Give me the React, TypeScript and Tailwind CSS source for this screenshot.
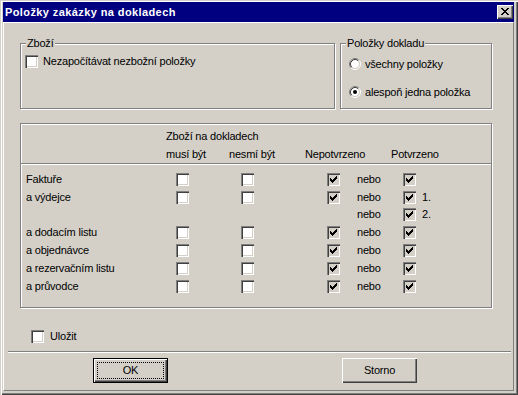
import React from 'react'

// classic Win 3D check box / radio pieces
const checkPixels: [number, number, number][] = [
	[6, 0, 1],
	[5, 1, 2],
	[0, 2, 1],
	[4, 2, 3],
	[0, 3, 2],
	[3, 3, 3],
	[0, 4, 5],
	[1, 5, 3],
	[2, 6, 1],
]

const closePixels: [number, number, number][] = [
	[0, 0, 2], [6, 0, 2],
	[1, 1, 2], [5, 1, 2],
	[2, 2, 4],
	[3, 3, 2],
	[2, 4, 4],
	[1, 5, 2], [5, 5, 2],
	[0, 6, 2], [6, 6, 2],
]

function Check({ checked = false }: { checked?: boolean }) {
	return (
		<div
			className={`relative w-[13px] h-[13px] shrink-0 shadow-[inset_1px_1px_0_#808080,inset_2px_2px_0_#404040,inset_-1px_-1px_0_#fff,inset_-2px_-2px_0_#d4d0c8] ${checked ? 'bg-[#d4d0c8]' : 'bg-white'}`}
		>
			{checked && (
				<svg width="7" height="7" viewBox="0 0 7 7" shapeRendering="crispEdges" className="absolute left-[3px] top-[3px]">
					{checkPixels.map(([x, y, w], i) => (
						<rect key={i} x={x} y={y} width={w} height={1} fill="#000" />
					))}
				</svg>
			)}
		</div>
	)
}

function Radio({ on = false }: { on?: boolean }) {
	return (
		<svg width="12" height="12" viewBox="0 0 12 12" className="shrink-0">
			<circle cx="6" cy="6" r="4" fill="#fff" />
			<path d="M2.11 9.89 A5.5 5.5 0 0 1 9.89 2.11" stroke="#808080" fill="none" />
			<path d="M9.89 2.11 A5.5 5.5 0 0 1 2.11 9.89" stroke="#fff" fill="none" />
			<path d="M2.82 9.18 A4.5 4.5 0 0 1 9.18 2.82" stroke="#404040" fill="none" />
			<path d="M9.18 2.82 A4.5 4.5 0 0 1 2.82 9.18" stroke="#d4d0c8" fill="none" />
			{on && <circle cx="6" cy="6" r="2" fill="#000" />}
		</svg>
	)
}

function Group({ label, className, children }: {
	label?: string
	className: string
	children: React.ReactNode
}) {
	return (
		<div className={`relative border border-[#808080] shadow-[inset_1px_1px_0_#fff,1px_1px_0_#fff] ${className}`}>
			{label && (
				<span className="absolute -top-[7px] left-[5px] px-px bg-[#d4d0c8] leading-[13px] whitespace-nowrap">
					{label}
				</span>
			)}
			{children}
		</div>
	)
}

const rows = [
	{ label: 'Faktuře', boxes: true, note: '', h: 'h-[18px]' },
	{ label: 'a výdejce', boxes: true, note: '1.', h: 'h-[18px]' },
	{ label: '', boxes: false, note: '2.', h: 'h-[17px]' },
	{ label: 'a dodacím listu', boxes: true, note: '', h: 'h-[18px]' },
	{ label: 'a objednávce', boxes: true, note: '', h: 'h-[18px]' },
	{ label: 'a rezervačním listu', boxes: true, note: '', h: 'h-[18px]' },
	{ label: 'a průvodce', boxes: true, note: '', h: 'h-[18px]' },
]

const cols = 'grid grid-cols-[145px_63px_76px_52px_34px_1fr] items-center'

export default function App() {
	return (
		<div className="w-[518px] h-[395px] bg-[#d4d0c8] pt-[2px] pl-[3px] pr-[4px] pb-[4px] flex flex-col text-[11px] tracking-[-0.2px] text-black font-['Liberation_Sans',Arial,sans-serif] shadow-[inset_1px_1px_0_#d4d0c8,inset_2px_2px_0_#fff,inset_-1px_-1px_0_#404040,inset_-2px_-2px_0_#808080] select-none">
			{/* title bar */}
			<div className="h-[20px] shrink-0 bg-[#000080] flex items-center justify-between pl-[2px] pr-[1px]">
				<span className="text-white font-bold tracking-[0.4px] leading-[13px]">Položky zakázky na dokladech</span>
				<div className="relative w-[16px] h-[14px] bg-[#d4d0c8] shadow-[inset_1px_1px_0_#fff,inset_-1px_-1px_0_#404040,inset_-2px_-2px_0_#808080]">
					<svg width="8" height="7" viewBox="0 0 8 7" shapeRendering="crispEdges" className="absolute left-[4px] top-[3px]">
						{closePixels.map(([x, y, w], i) => (
							<rect key={i} x={x} y={y} width={w} height={1} fill="#000" />
						))}
					</svg>
				</div>
			</div>

			{/* client */}
			<div className="flex-1 flex flex-col border border-white border-r-[#808080] border-b-[#808080]">
				<div className="flex mt-[20px] pl-[16px] gap-[5px]">
					<Group label="Zboží" className="w-[315px] h-[66px] pl-[4px] pt-[11px]">
						<div className="flex items-center gap-[5px]">
							<Check />
							<span className="leading-[13px]">Nezapočítávat nezbožní položky</span>
						</div>
					</Group>
					<Group label="Položky dokladu" className="w-[152px] h-[66px] pl-[8px] pt-[14px]">
						<div className="flex flex-col gap-[16px]">
							<div className="flex items-center gap-[4px] h-[12px]">
								<Radio />
								<span className="leading-[13px]">všechny položky</span>
							</div>
							<div className="flex items-center gap-[4px] h-[12px]">
								<Radio on />
								<span className="leading-[13px]">alespoň jedna položka</span>
							</div>
						</div>
					</Group>
				</div>

				<div className="pl-[16px] mt-[14px]">
					<Group className="w-[472px] h-[185px]">
						<div className="pt-[3px] border-b border-[#808080] shadow-[0_1px_0_#fff]">
							<div className={`${cols} h-[18px]`}>
								<span />
								<span className="col-span-5 whitespace-nowrap">Zboží na dokladech</span>
							</div>
							<div className={`${cols} h-[18px] whitespace-nowrap`}>
								<span />
								<span>musí být</span>
								<span>nesmí být</span>
								<span className="col-span-2">Nepotvrzeno</span>
								<span>Potvrzeno</span>
							</div>
						</div>
						<div className="pt-[6px]">
							{rows.map((r, i) => (
								<div key={i} className={`${cols} ${r.h} whitespace-nowrap`}>
									<span className="pl-[5px]">{r.label}</span>
									<div className="pl-[10px]">{r.boxes && <Check />}</div>
									<div className="pl-[12px]">{r.boxes && <Check />}</div>
									<div className="pl-[22px]">{r.boxes && <Check checked />}</div>
									<span>nebo</span>
									<div className="pl-[12px] flex items-center gap-[6px]">
										<Check checked />
										{r.note && <span>{r.note}</span>}
									</div>
								</div>
							))}
						</div>
					</Group>
				</div>

				<div className="flex items-center gap-[6px] pl-[27px] mt-[22px] h-[13px]">
					<Check />
					<span className="leading-[13px]">Uložit</span>
				</div>

				<div className="mt-[8px] ml-[4px] w-[503px] h-0 border-t border-[#808080] shadow-[0_1px_0_#fff]" />

				<div className="flex mt-[6px]">
					<button className="ml-[89px] w-[75px] h-[25px] border border-black bg-[#d4d0c8] p-0">
						<div className="h-full shadow-[inset_1px_1px_0_#fff,inset_-1px_-1px_0_#404040,inset_-2px_-2px_0_#808080] p-[3px]">
							<div className="h-full border border-dotted border-black flex items-center justify-center">OK</div>
						</div>
					</button>
					<button className="ml-[174px] w-[75px] h-[25px] bg-[#d4d0c8] flex items-center justify-center shadow-[inset_1px_1px_0_#fff,inset_-1px_-1px_0_#404040,inset_-2px_-2px_0_#808080]">
						Storno
					</button>
				</div>
			</div>
		</div>
	)
}
